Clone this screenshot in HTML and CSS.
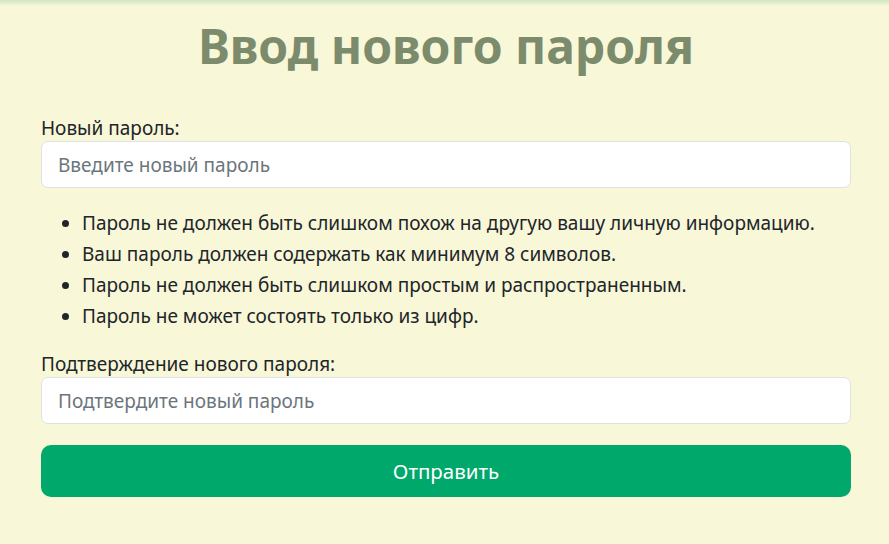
FILE: index.html
```html
<!DOCTYPE html>
<html lang="ru">
<head>
<meta charset="utf-8">
<title>Ввод нового пароля</title>
<link rel="stylesheet" href="styles.css">
</head>
<body>
<div class="topbar"></div>
<main class="page">
  <h1 class="title">Ввод нового пароля</h1>
  <form class="form">
    <div class="field">
      <label class="label" for="p1">Новый пароль:</label>
      <input class="input" id="p1" type="password" placeholder="Введите новый пароль">
    </div>
    <ul class="rules">
      <li>Пароль не должен быть слишком похож на другую вашу личную информацию.</li>
      <li>Ваш пароль должен содержать как минимум 8 символов.</li>
      <li>Пароль не должен быть слишком простым и распространенным.</li>
      <li>Пароль не может состоять только из цифр.</li>
    </ul>
    <div class="field">
      <label class="label" for="p2">Подтверждение нового пароля:</label>
      <input class="input" id="p2" type="password" placeholder="Подтвердите новый пароль">
    </div>
    <button class="submit" type="button">Отправить</button>
  </form>
</main>
</body>
</html>
```
FILE: styles.css
```css
* { box-sizing: border-box; }
html, body { margin: 0; padding: 0; }
body {
  background: #f8f7d8;
  font-family: "Noto Sans", "Open Sans", sans-serif;
  color: #212529;
  height: 544px;
  overflow: hidden;
}
.topbar {
  height: 6px;
  background: linear-gradient(to bottom, #cfe6c4, #f8f7d8);
}
.page {
  width: 810px;
  margin-left: 41px;
}
.title {
  margin: 8px 0 0;
  text-align: center;
  font-size: 48px;
  line-height: 64px;
  font-weight: 700;
  color: #7b8b6c;
}
.form {
  margin-top: 38px;
  display: flex;
  flex-direction: column;
}
.field {
  display: flex;
  flex-direction: column;
}
.label {
  font-size: 19px;
  line-height: 24px;
  margin-bottom: 1px;
}
.input {
  height: 47px;
  border: 1px solid #dee2e6;
  border-radius: 7px;
  background: #fff;
  padding: 0 16px;
  font-family: inherit;
  font-size: 19px;
  color: #212529;
}
.input::placeholder { color: #6c757d; }
.rules {
  margin: 20px 0 20px;
  padding-left: 41px;
  font-size: 19px;
  line-height: 31px;
}
.submit {
  margin-top: 21px;
  height: 52px;
  border: none;
  border-radius: 10px;
  background: #00a86b;
  color: #fff;
  font-family: inherit;
  font-size: 20.5px;
}
```
